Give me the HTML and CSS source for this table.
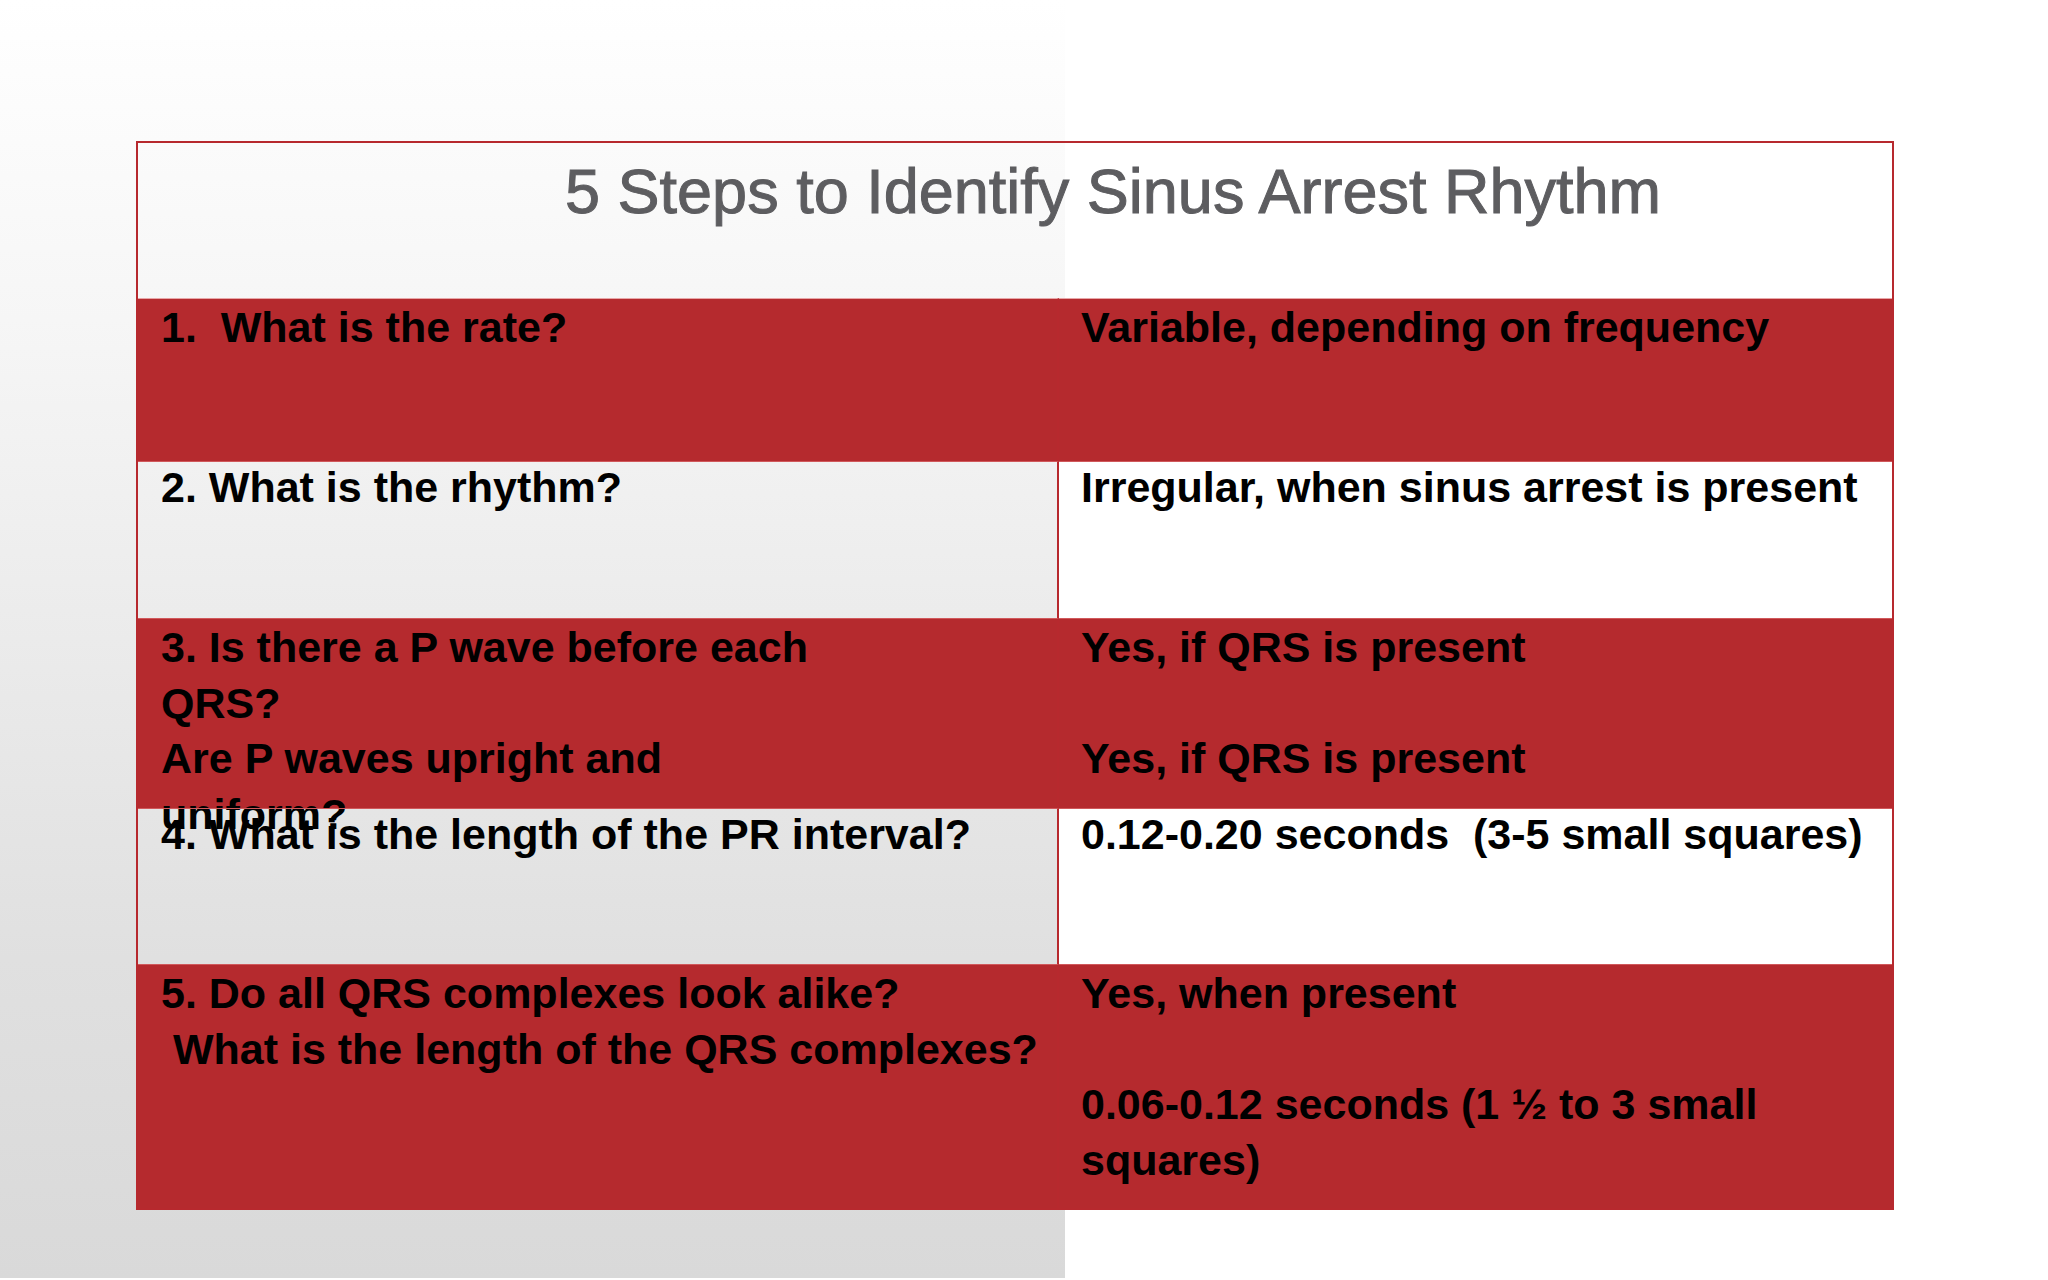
FILE: index.html
```html
<!DOCTYPE html>
<html lang="en">
<head>
<meta charset="utf-8">
<title>5 Steps to Identify Sinus Arrest Rhythm</title>
<link rel="stylesheet" href="styles.css">
</head>
<body>
<main class="slide">
  <section class="table">
    <div class="cell title-cell">5 Steps to Identify Sinus Arrest Rhythm</div>

    <div class="cell q red r1">1.&nbsp; What is the rate?</div>
    <div class="cell a red r1">Variable, depending on frequency</div>

    <div class="cell q plain r2">2. What is the rhythm?</div>
    <div class="cell a white r2">Irregular, when sinus arrest is present</div>

    <div class="cell q red r3">3. Is there a P wave before each<br>QRS?<br>Are P waves upright and<br>uniform?</div>
    <div class="cell a red r3">Yes, if QRS is present<br><br>Yes, if QRS is present</div>

    <div class="cell q plain r4">4. What is the length of the PR interval?</div>
    <div class="cell a white r4">0.12-0.20 seconds&nbsp; (3-5 small squares)</div>

    <div class="cell q red r5">5. Do all QRS complexes look alike?<br>&nbsp;What is the length of the QRS complexes?</div>
    <div class="cell a red r5">Yes, when present<br><br>0.06-0.12 seconds (1 ½ to 3 small<br>squares)</div>
  </section>
</main>
</body>
</html>
```

FILE: styles.css
```css
html, body {
  margin: 0;
  padding: 0;
}

body {
  width: 2048px;
  height: 1280px;
  overflow: hidden;
  background:
    linear-gradient(180deg, #ffffff 0%, #f6f6f6 25%, #ebebeb 50%, #e0e0e0 75%, #d9d9d9 100%) no-repeat 0 0 / 1065px 1278px,
    #ffffff;
  font-family: "Liberation Sans", Arial, sans-serif;
}

.slide {
  padding: 141px 0 0 136px;
}

.table {
  width: 1758px;
  box-sizing: border-box;
  display: grid;
  grid-template-columns: 921px 833px;
  grid-template-rows: 155px 163px 157px 190px 156px 244px;
  border: 2px solid #b7292e;
}

.cell {
  box-sizing: border-box;
  overflow: visible;
  font-weight: 700;
  font-size: 43px;
  line-height: 55.5px;
  color: #000;
  white-space: nowrap;
  border-top: 1px solid #d0585b;
  padding-top: 1px;
}

.title-cell {
  grid-column: 1 / -1;
  border-top: 0;
  padding: 11px 0 0 427px;
  font-size: 63px;
  line-height: 75px;
  font-weight: 400;
  color: #5d5d60;
  -webkit-text-stroke: 1px #5d5d60;
}

.r1 { border-top: 1px solid #e8a6a8; }

.q {
  padding-left: 23px;
  border-right: 2px solid #b7292e;
}

.a {
  padding-left: 22px;
}

.red {
  background: #b52a2e;
}

.plain {
  background: transparent;
}

.white {
  background: #ffffff;
}

.r2.q, .r2.a {
  padding-top: 0;
  line-height: 51.5px;
}

.r4.q, .r4.a {
  padding-top: 0;
  line-height: 51px;
}
```
